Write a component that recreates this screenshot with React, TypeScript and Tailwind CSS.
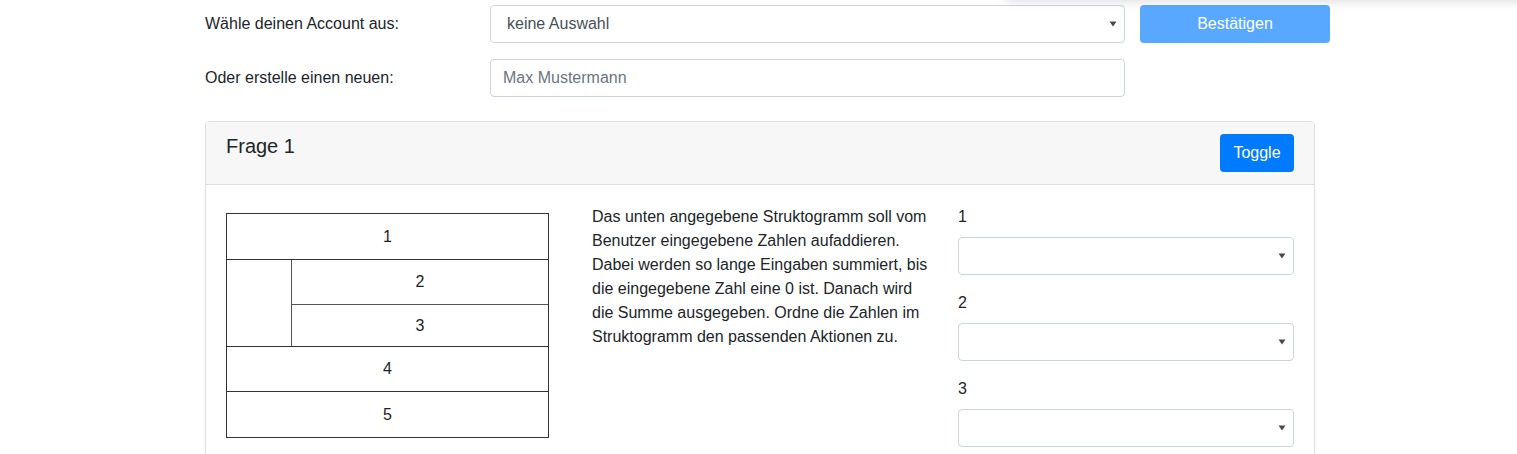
import React from 'react';

const font = { fontFamily: '"Liberation Sans", Arial, sans-serif' };

const Caret = () => (
  <svg width="8" height="6" viewBox="0 0 8 6" className="shrink-0">
    <path d="M0.5 0.5 H7.5 L4 5.5 Z" fill="#4a4a4a" />
  </svg>
);

const FakeSelect = ({ value, className }: { value?: string; className?: string }) => (
  <div
    className={`flex h-[38px] shrink-0 items-center justify-between rounded-[4px] border border-[#ced4da] bg-white pl-4 pr-[7px] text-[16px] text-[#495057] ${className ?? ''}`}
  >
    <span>{value ?? ''}</span>
    <Caret />
  </div>
);

// heights include the bottom border (border-box)
const Structogram = () => {
  const line = 'border-[#333]';
  return (
    <div className={`mt-2 flex w-[323px] flex-col border ${line} text-[16px] text-[#222]`}>
      <div className={`flex h-[46px] items-center justify-center border-b ${line}`}>1</div>
      <div className={`flex border-b ${line}`}>
        <div className="w-[64px] shrink-0" />
        <div className="flex flex-1 flex-col border-l border-[#555]">
          <div className="flex h-[45px] items-center justify-center border-b border-[#555]">2</div>
          <div className="flex h-[41px] items-center justify-center">3</div>
        </div>
      </div>
      <div className={`flex h-[45px] items-center justify-center border-b ${line}`}>4</div>
      <div className="flex h-[45px] items-center justify-center">5</div>
    </div>
  );
};

const answers = ['1', '2', '3'];

export default function App() {
  return (
    <div className="relative min-h-[454px] overflow-hidden bg-white pt-[5px] text-[16px] leading-6 text-[#212529]" style={font}>
      {/* shadow of a panel sitting just above the viewport */}
      <div className="absolute -top-[30px] left-[1000px] right-[-30px] h-[30px] rounded-[16px] bg-white shadow-[0_2px_10px_rgba(0,0,0,0.13)]" />

      <div className="ml-[205px] w-[1110px]">
        <div className="flex items-center">
          <label className="w-[285px] shrink-0">Wähle deinen Account aus:</label>
          <FakeSelect value="keine Auswahl" className="w-[635px]" />
          <button className="ml-[15px] h-[38px] w-[190px] shrink-0 rounded-[4px] bg-[#007bff] text-white opacity-65">
            Bestätigen
          </button>
        </div>

        <div className="mt-4 flex items-center">
          <label className="w-[285px] shrink-0">Oder erstelle einen neuen:</label>
          <div className="flex h-[38px] w-[635px] shrink-0 items-center rounded-[4px] border border-[#ced4da] px-3 text-[#6c757d]">
            Max Mustermann
          </div>
        </div>

        <div className="mt-6 rounded-[4px] border border-[#dfdfdf]">
          <div className="flex items-start justify-between border-b border-[#dfdfdf] bg-[#f7f7f7] px-5 py-3">
            <h5 className="text-[20px] leading-6">Frage 1</h5>
            <button className="h-[38px] w-[74px] rounded-[4px] bg-[#007bff] text-white">Toggle</button>
          </div>

          <div className="grid grid-cols-3 gap-[30px] p-5">
            <div>
              <Structogram />
            </div>
            <p>
              Das unten angegebene Struktogramm soll vom Benutzer eingegebene Zahlen aufaddieren. Dabei werden so
              lange Eingaben summiert, bis die eingegebene Zahl eine 0 ist. Danach wird die Summe ausgegeben. Ordne
              die Zahlen im Struktogramm den passenden Aktionen zu.
            </p>
            <div>
              {answers.map((a) => (
                <div key={a} className="mb-4">
                  <label className="mb-2 block">{a}</label>
                  <FakeSelect />
                </div>
              ))}
            </div>
          </div>
        </div>
      </div>
    </div>
  );
}
